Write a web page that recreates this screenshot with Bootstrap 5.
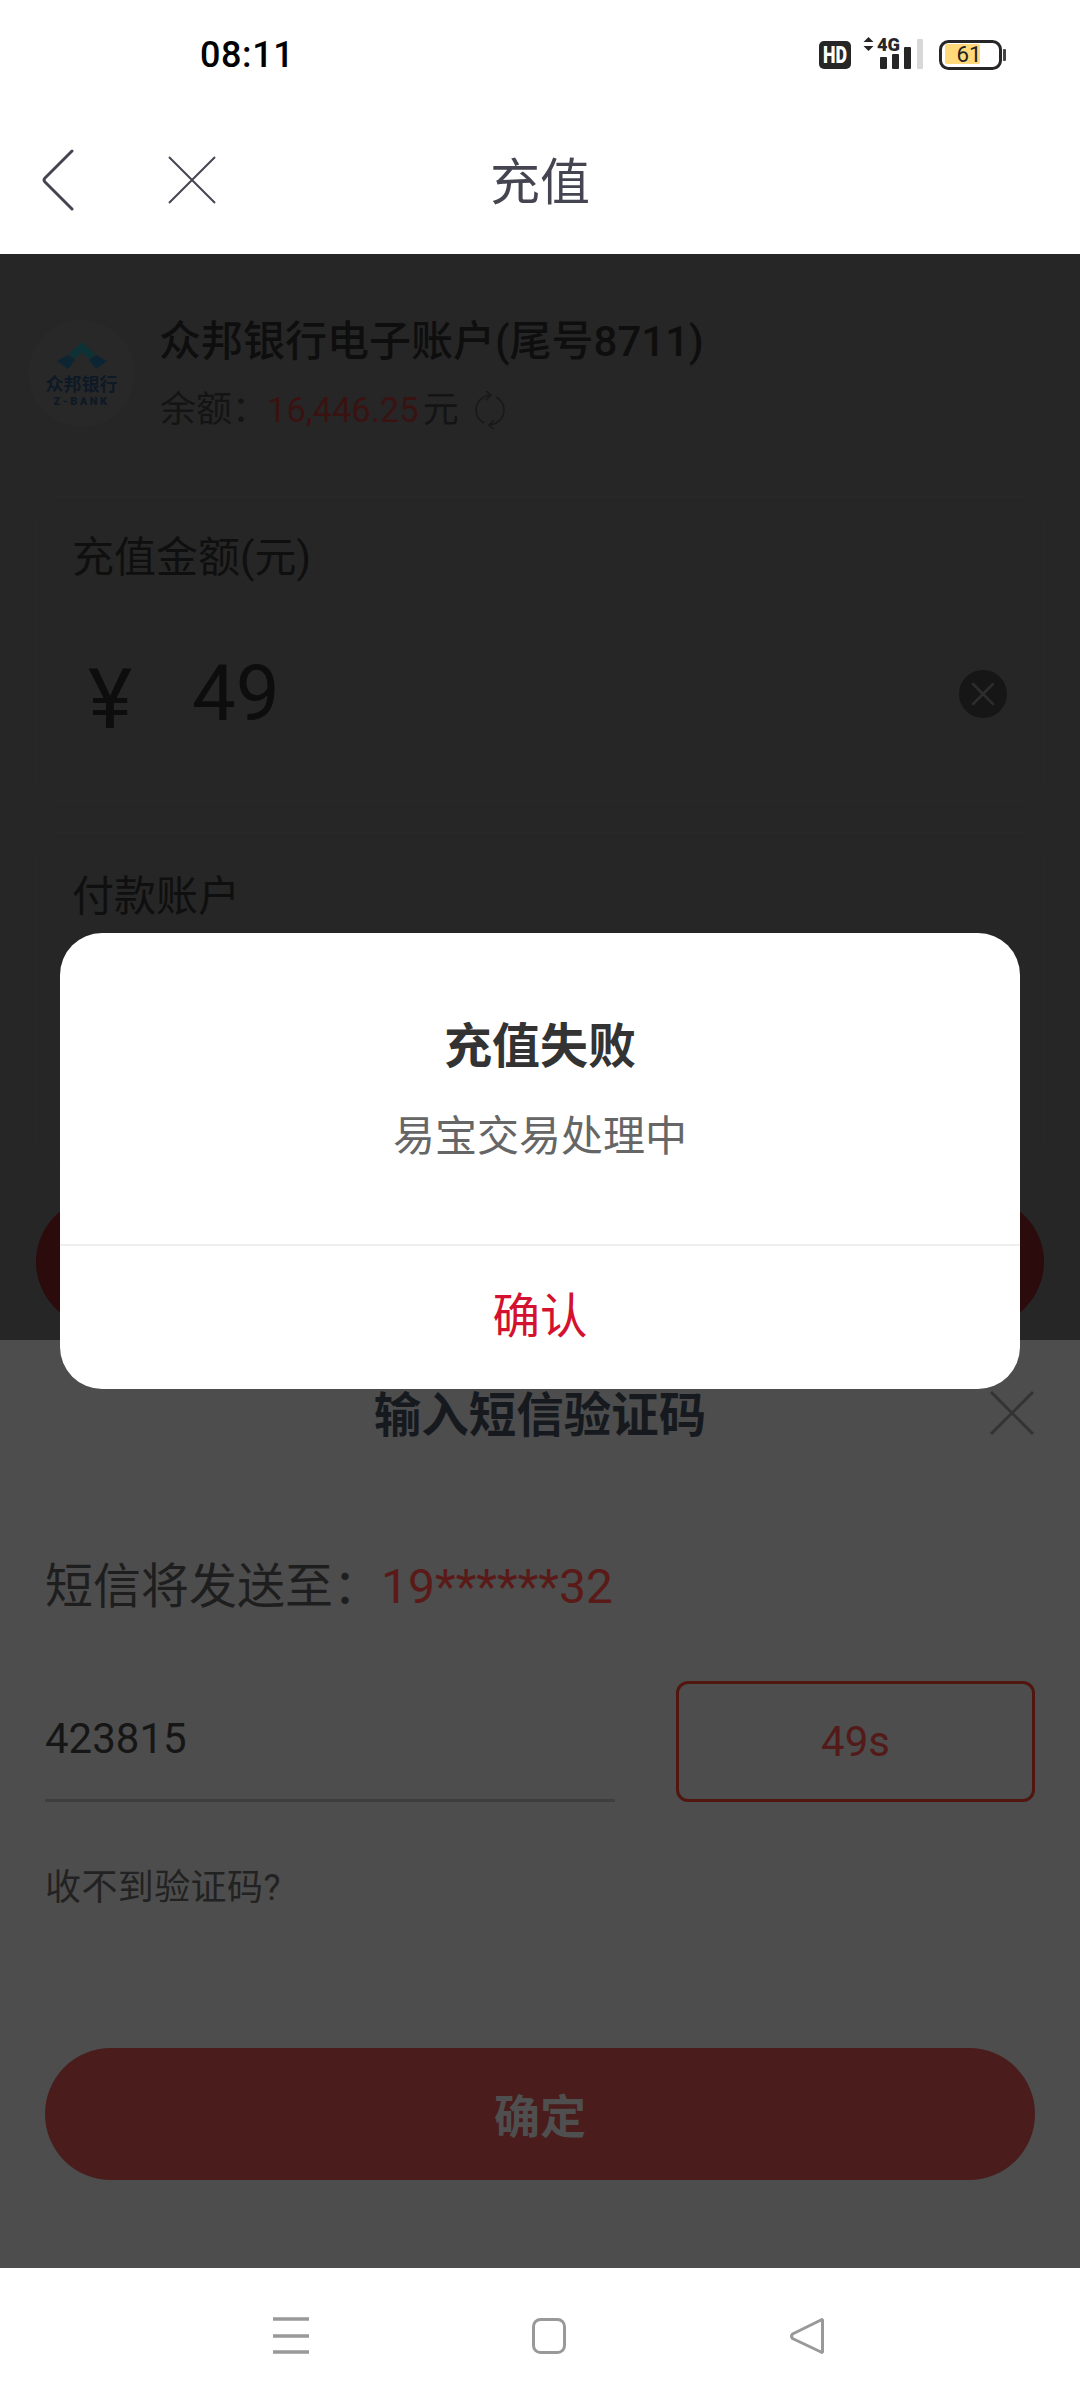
<!DOCTYPE html>
<html lang="zh">
<head>
<meta charset="utf-8">
<title>充值</title>
<link href="https://cdn.jsdelivr.net/npm/bootstrap@5.3.0/dist/css/bootstrap.min.css" rel="stylesheet">
<style>
:root{--cjk:Roboto,"Noto Sans CJK SC",sans-serif}
html,body{margin:0;background:#fff}
body{width:1080px;height:2400px;overflow:hidden;position:relative;font-family:var(--cjk)}
.status-row{height:106px;padding:4px 74px 0 200px;color:#000}
.clock{font-size:36px;font-weight:500;line-height:1;letter-spacing:.6px}
.app-head{height:148px;padding-top:6px;display:grid;grid-template-columns:1fr auto 1fr;align-items:center}
.app-tools{padding-left:42px;gap:94px;margin-top:-6px}
.app-title{font-size:50px;line-height:1;color:#444550;text-align:center}
.dim-area{height:1086px;background:#262626;overflow:hidden;padding:0 36px}
.acct{padding-top:62px;height:242px;margin-left:-8px}
.logo-disc{width:107px;height:107px;border-radius:50%;background:#282828;flex:none;margin-top:4px;margin-right:25px;text-align:center;padding-top:22px}
.logo-cn{font-size:18px;line-height:20px;font-weight:700;color:#0e1926;margin-top:5px;white-space:nowrap}
.logo-en{font-size:11px;line-height:10px;font-weight:900;color:#0e1926;letter-spacing:2.5px;margin-top:2px;white-space:nowrap}
.acct-name{font-size:42px;line-height:52px;font-weight:500;color:#0e0e0e;white-space:nowrap;margin-left:-1px}
.acct-bal{font-size:36px;line-height:44px;color:#141414;margin-top:20px;white-space:nowrap}
.red-amt{color:#3a1212;font-size:34.500px;margin-left:-1px;margin-right:4px}
.pane{border:1px solid #282828;border-radius:20px;background:#262626;padding:0 35px}
.pane-one{height:306px;margin-bottom:30px}
.pane-two{height:330px}
.pane-label{font-size:42px;line-height:50px;color:#0f0f0f;padding-top:38px;height:88px;box-sizing:content-box}
.pane-one .pane-label{padding-top:36px}
.pane-two .pane-label{padding-top:39px}
.amt-row{margin-top:28px;height:90px}
.yen{font-size:84px;line-height:1;color:#0d0d0d;width:120px;padding-left:16px;margin-top:12px}
.amt{font-size:78px;line-height:1;color:#0d0d0d}
.clear-btn{width:48px;height:48px;border-radius:50%;background:#161616;margin-left:auto;margin-right:1px}
.behind-btn{height:130px;border-radius:65px;background:#2b0b0b;margin-top:35px}
.sheet{height:928px;background:#4d4d4d;padding:0 45px;position:relative}
.sheet-title{font-size:47.5px;line-height:1;font-weight:700;color:#161a1f;text-align:center;padding-top:53px;height:148px}
.sheet-x{position:absolute;left:989px;top:50px}
.sms-line{font-size:48px;line-height:60px;color:#1e1e1e;padding-top:69px;box-sizing:content-box}
.phone{color:#5a1a18}
.code-row{margin-top:64px;height:122px}
.code-box{width:570px;height:121px;border-bottom:3px solid #3e3e3e;font-size:42px;line-height:116px;color:#161616}
.timer-btn{width:359px;height:121px;border:3px solid #521610;border-radius:12px;color:#521a18;font-size:42px;margin-left:auto;line-height:1;background:transparent}
.help-link{font-size:36px;line-height:44px;color:#222;margin-top:63px;letter-spacing:.4px}
.sheet-btn{height:132px;border-radius:66px;background:#4a1c1c;color:#4f4f4f;font-size:46px;font-weight:700;margin-top:138px;border:0;width:100%;padding-top:8px}
.sys-nav{height:132px;padding-top:48px}
.failure-box{position:absolute;left:60px;top:933px;width:960px;height:456px;border-radius:42px;background:#fff;overflow:hidden}
.fail-body{height:313px;border-bottom:2px solid #efefef;padding-top:89px;text-align:center}
.fail-title{font-size:48px;line-height:50px;font-weight:700;color:#333;margin:0}
.fail-msg{font-size:42px;line-height:50px;color:#666;margin-top:40px}
.fail-ok{height:143px;font-size:47.5px;color:#d4112f;background:none;border:0;width:100%;line-height:1}
</style>
</head>
<body>
<header class="bg-white">
  <div class="status-row d-flex align-items-center justify-content-between">
    <span class="clock">08:11</span>
    <svg width="190" height="36" viewBox="816 38 190 36" aria-label="状态栏">
      <rect x="819" y="42" width="32" height="28" rx="5" fill="#262626"/>
      <text x="835" y="64" text-anchor="middle" font-family="Roboto,sans-serif" font-size="23" font-weight="900" fill="#fff" textLength="24" lengthAdjust="spacingAndGlyphs">HD</text>
      <path d="M868.500 38l5 5h-10zM868.500 52l5-5h-10z" fill="#262626"/>
      <text x="877" y="52" font-family="Roboto,sans-serif" font-size="18" font-weight="900" fill="#262626" textLength="23" lengthAdjust="spacingAndGlyphs">4G</text>
      <rect x="880" y="58" width="7" height="12" rx="1" fill="#262626"/>
      <rect x="892" y="55" width="7" height="15" rx="1" fill="#262626"/>
      <rect x="904" y="48" width="7" height="22" rx="1" fill="#262626"/>
      <rect x="917" y="40" width="6" height="30" rx="1" fill="#d8d8d8"/>
      <rect x="945" y="45" width="35" height="20" rx="2" fill="#ffd97a"/>
      <rect x="940.500" y="42.500" width="60" height="27" rx="8" fill="none" stroke="#262626" stroke-width="3"/>
      <rect x="1003" y="50" width="3" height="12" rx="1" fill="#444"/>
      <text x="969" y="63" text-anchor="middle" font-family="Roboto,sans-serif" font-size="22" fill="#222" textLength="25" lengthAdjust="spacingAndGlyphs">61</text>
    </svg>
  </div>
  <div class="app-head">
    <div class="app-tools d-flex align-items-center">
      <svg width="32" height="62" viewBox="0 0 32 62" aria-hidden="true"><path d="M30 2L3 29q-2 2 0 4l27 27" fill="none" stroke="#444550" stroke-width="3" stroke-linecap="round" stroke-linejoin="round"/></svg>
      <svg width="48" height="48" viewBox="0 0 48 48" aria-hidden="true"><path d="M1 1l46 46M47 1L1 47" fill="none" stroke="#444550" stroke-width="2"/></svg>
    </div>
    <div class="app-title">充值</div>
    <div></div>
  </div>
</header>

<main class="dim-area">
  <div class="acct d-flex">
    <div class="logo-disc">
      <svg width="50" height="28" viewBox="0 0 50 28" class="d-block mx-auto" aria-hidden="true">
        <path d="M25 0l13 12-6 5-7-7-7 7-6-5z" fill="#0c3236"/>
        <path d="M11 13l7 5-7 9-11-8zM39 13l-7 5 7 9 11-8z" fill="#0d2433"/>
      </svg>
      <div class="logo-cn">众邦银行</div>
      <div class="logo-en">Z-BANK</div>
    </div>
    <div>
      <div class="acct-name">众邦银行电子账户(尾号8711)</div>
      <div class="acct-bal d-flex align-items-center">余额：<span class="red-amt">16,446.25</span>元
        <svg class="ms-3" width="30" height="38" viewBox="0 0 30 38" aria-hidden="true"><path d="M16 4C7 5 1 11 1 19c0 5 3 10 8 13M14 34c9-1 15-7 15-15 0-5-3-10-8-13M11 0l5 4-5 5M19 29l-5 5 5 4" fill="none" stroke="#181818" stroke-width="1.500"/></svg>
      </div>
    </div>
  </div>
  <section class="pane pane-one">
    <div class="pane-label">充值金额(元)</div>
    <div class="amt-row d-flex align-items-center">
      <span class="yen">¥</span><span class="amt">49</span>
      <span class="clear-btn d-flex align-items-center justify-content-center">
        <svg width="24" height="24" viewBox="0 0 24 24" aria-hidden="true"><path d="M2 2l20 20M22 2L2 22" stroke="#2d2d2d" stroke-width="2.500" stroke-linecap="round"/></svg>
      </span>
    </div>
  </section>
  <section class="pane pane-two">
    <div class="pane-label">付款账户</div>
  </section>
  <div class="behind-btn"></div>
</main>

<section class="sheet">
  <div class="sheet-title">输入短信验证码</div>
  <svg class="sheet-x" width="46" height="46" viewBox="0 0 46 46" aria-hidden="true"><path d="M2 2l42 42M44 2L2 44" fill="none" stroke="#333" stroke-width="3"/></svg>
  <div class="sms-line">短信将发送至：<span class="phone">19******32</span></div>
  <div class="code-row d-flex">
    <div class="code-box">423815</div>
    <button type="button" class="timer-btn">49s</button>
  </div>
  <div class="help-link">收不到验证码?</div>
  <button type="button" class="sheet-btn d-block">确定</button>
</section>

<footer class="sys-nav bg-white d-flex justify-content-center">
  <svg width="570" height="40" viewBox="255 2314 570 40" aria-hidden="true">
    <path d="M273 2317h36M273 2334h36M273 2350h36" stroke="#999" stroke-width="3.500"/>
    <rect x="533.500" y="2317.500" width="31" height="33" rx="7" fill="none" stroke="#999" stroke-width="3"/>
    <path d="M822.500 2318.500v31q0 1.500-1.500.5l-28.500-13.500q-2-2.500 0-4.500l28.500-14q1.500-1 1.500.5z" fill="none" stroke="#999" stroke-width="3" stroke-linejoin="round"/>
  </svg>
</footer>

<div class="failure-box" role="dialog">
  <div class="fail-body">
    <h2 class="fail-title">充值失败</h2>
    <div class="fail-msg">易宝交易处理中</div>
  </div>
  <button type="button" class="fail-ok d-block">确认</button>
</div>
</body>
</html>
